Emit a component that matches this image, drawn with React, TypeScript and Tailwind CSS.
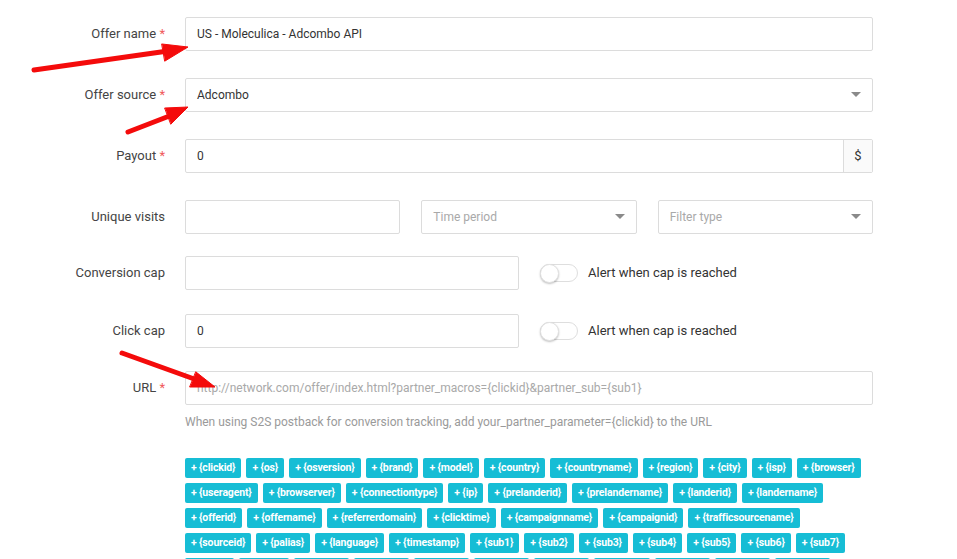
import React from "react";

const Caret = () => (
  <svg width="10" height="6" viewBox="0 0 10 6" className="shrink-0">
    <path d="M0 0 L10 0 L5 5 Z" fill="#8a8a8a" />
  </svg>
);

const Label = ({ text, req }: { text: string; req?: boolean }) => (
  <div className="w-[165px] shrink-0 text-right text-[13px] text-[#444]">
    {text}
    {req && <span className="text-[#f05a5a]"> *</span>}
  </div>
);

const Toggle = () => (
  <div className="flex items-center gap-[10px] ml-[21px]">
    <div className="relative w-[38px] h-[18px] rounded-full border border-[#dedede] bg-white">
      <div className="absolute left-[-1px] top-[-1px] w-[19px] h-[19px] rounded-full bg-white border border-[#e2e2e2] shadow-[0_1px_2px_rgba(0,0,0,0.25)]" />
    </div>
    <span className="text-[13px] text-[#333]">Alert when cap is reached</span>
  </div>
);

const rows: string[][] = [
  ["clickid", "os", "osversion", "brand", "model", "country", "countryname", "region", "city", "isp", "browser"],
  ["useragent", "browserver", "connectiontype", "ip", "prelanderid", "prelandername", "landerid", "landername"],
  ["offerid", "offername", "referrerdomain", "clicktime", "campaignname", "campaignid", "trafficsourcename"],
  ["sourceid", "palias", "language", "timestamp", "sub1", "sub2", "sub3", "sub4", "sub5", "sub6", "sub7"],
  ["sub8", "sub9", "sub10", "sub11", "sub12", "sub13", "sub14", "sub15", "sub16", "sub17", "sub18"],
];

export default function App() {
  const input = "h-[34px] border border-[#dcdcdc] rounded-[2px] bg-white flex items-center px-[11px] text-[12px]";
  return (
    <div className="relative w-[957px] h-[559px] overflow-hidden bg-white" style={{ fontFamily: "Roboto, 'Open Sans', sans-serif" }}>
      <div className="pt-[17px]">
        {/* Offer name */}
        <div className="flex items-center">
          <Label text="Offer name" req />
          <div className={`${input} ml-[20px] w-[688px] text-[#333]`}>US - Moleculica - Adcombo API</div>
        </div>
        {/* Offer source */}
        <div className="flex items-center mt-[27px]">
          <Label text="Offer source" req />
          <div className={`${input} ml-[20px] w-[688px] justify-between text-[#333]`}>
            <span>Adcombo</span>
            <Caret />
          </div>
        </div>
        {/* Payout */}
        <div className="flex items-center mt-[27px]">
          <Label text="Payout" req />
          <div className="ml-[20px] w-[688px] h-[34px] flex border border-[#dcdcdc] rounded-[2px] text-[12px]">
            <div className="flex-1 flex items-center px-[11px] text-[#333]">0</div>
            <div className="w-[29px] flex items-center justify-center border-l border-[#dcdcdc] bg-[#fafafa] text-[#333] text-[13px]">$</div>
          </div>
        </div>
        {/* Unique visits */}
        <div className="flex items-center mt-[27px]">
          <Label text="Unique visits" />
          <div className="ml-[20px] w-[688px] grid grid-cols-3 gap-[21px]">
            <div className={input}></div>
            <div className={`${input} justify-between text-[#a9a9a9]`}>
              <span>Time period</span>
              <Caret />
            </div>
            <div className={`${input} justify-between text-[#a9a9a9]`}>
              <span>Filter type</span>
              <Caret />
            </div>
          </div>
        </div>
        {/* Conversion cap */}
        <div className="flex items-center mt-[22px]">
          <Label text="Conversion cap" />
          <div className={`${input} ml-[20px] w-[334px]`}></div>
          <Toggle />
        </div>
        {/* Click cap */}
        <div className="flex items-center mt-[24px]">
          <Label text="Click cap" />
          <div className={`${input} ml-[20px] w-[334px] text-[#333]`}>0</div>
          <Toggle />
        </div>
        {/* URL */}
        <div className="flex items-center mt-[23px]">
          <Label text="URL" req />
          <div className={`${input} ml-[20px] w-[688px] text-[#a9a9a9]`}>
            http://network.com/offer/index.html?partner_macros={"{clickid}"}&amp;partner_sub={"{sub1}"}
          </div>
        </div>
        <div className="ml-[185px] mt-[9px] text-[12px] leading-[16px] text-[#9a9a9a]">
          When using S2S postback for conversion tracking, add your_partner_parameter={"{clickid}"} to the URL
        </div>
        {/* Tags */}
        <div className="ml-[185px] mt-[28px] flex flex-col gap-[5px]">
          {rows.map((r, i) => (
            <div key={i} className="flex gap-[5px]">
              {r.map((t) => (
                <span
                  key={t}
                  className="h-[20px] px-[6px] flex items-center rounded-[2px] bg-[#16bdd5] text-white text-[10.5px] tracking-[-0.15px] font-bold"
                >
                  + {"{" + t + "}"}
                </span>
              ))}
            </div>
          ))}
        </div>
      </div>

      {/* annotation arrows */}
      <svg className="absolute left-0 top-0 pointer-events-none" width="957" height="559" viewBox="0 0 957 559">
        <g fill="#f40b0b" stroke="#f40b0b" strokeLinecap="round" strokeLinejoin="round">
          <line x1="34" y1="70" x2="168" y2="51" strokeWidth="5" />
          <polygon points="162,44 188,47 165,61" strokeWidth="1" />
          <line x1="128" y1="132" x2="172" y2="115" strokeWidth="5" />
          <polygon points="165,108 188,107 171,124" strokeWidth="1" />
          <line x1="122" y1="353" x2="197" y2="380" strokeWidth="5" />
          <polygon points="196,372 215,387 190,387" strokeWidth="1" />
        </g>
      </svg>
    </div>
  );
}
